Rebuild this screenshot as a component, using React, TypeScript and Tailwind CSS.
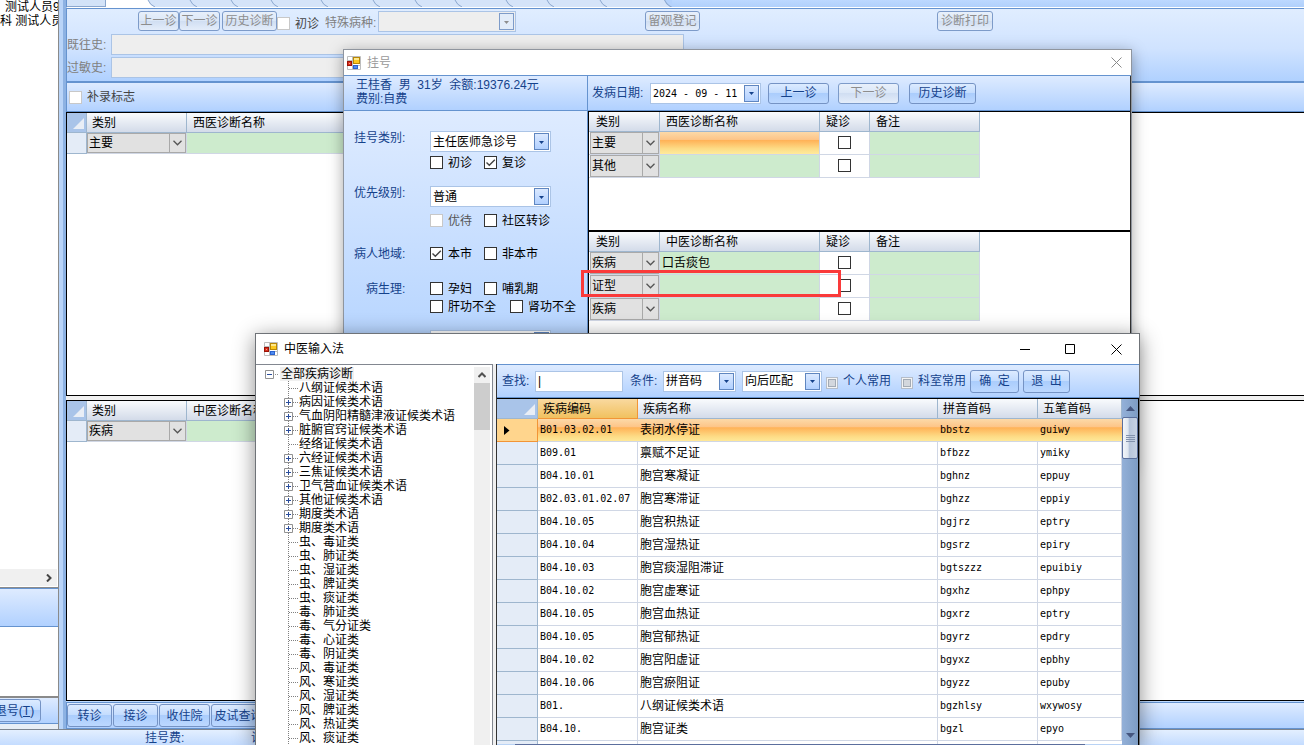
import React, { useState } from 'react'

const treeNodes = [
    { text: '八纲证候类术语', open: false },
    { text: '病因证候类术语', open: true },
    { text: '气血阴阳精髓津液证候类术语', open: true },
    { text: '脏腑官窍证候类术语', open: true },
    { text: '经络证候类术语', open: false },
    { text: '六经证候类术语', open: true },
    { text: '三焦证候类术语', open: true },
    { text: '卫气营血证候类术语', open: true },
    { text: '其他证候类术语', open: true },
    { text: '期度类术语', open: true },
    { text: '期度类术语', open: true },
    { text: '虫、毒证类', open: false },
    { text: '虫、肺证类', open: false },
    { text: '虫、湿证类', open: false },
    { text: '虫、脾证类', open: false },
    { text: '虫、痰证类', open: false },
    { text: '毒、肺证类', open: false },
    { text: '毒、气分证类', open: false },
    { text: '毒、心证类', open: false },
    { text: '毒、阴证类', open: false },
    { text: '风、毒证类', open: false },
    { text: '风、寒证类', open: false },
    { text: '风、湿证类', open: false },
    { text: '风、脾证类', open: false },
    { text: '风、热证类', open: false },
    { text: '风、痰证类', open: false },
]

const diseases = [
    ['B01.03.02.01', '表闭水停证', 'bbstz', 'guiwy'],
    ['B09.01', '禀赋不足证', 'bfbzz', 'ymiky'],
    ['B04.10.01', '胞宫寒凝证', 'bghnz', 'eppuy'],
    ['B02.03.01.02.07', '胞宫寒滞证', 'bghzz', 'eppiy'],
    ['B04.10.05', '胞宫积热证', 'bgjrz', 'eptry'],
    ['B04.10.04', '胞宫湿热证', 'bgsrz', 'epiry'],
    ['B04.10.03', '胞宫痰湿阻滞证', 'bgtszzz', 'epuibiy'],
    ['B04.10.02', '胞宫虚寒证', 'bgxhz', 'ephpy'],
    ['B04.10.05', '胞宫血热证', 'bgxrz', 'eptry'],
    ['B04.10.05', '胞宫郁热证', 'bgyrz', 'epdry'],
    ['B04.10.02', '胞宫阳虚证', 'bgyxz', 'epbhy'],
    ['B04.10.06', '胞宫瘀阻证', 'bgyzz', 'epuby'],
    ['B01.', '八纲证候类术语', 'bgzhlsy', 'wxywosy'],
    ['B04.10.', '胞宫证类', 'bgzl', 'epyo'],
]

// widths of the slanted page tabs, the first one is the open page
const tabWidths = ['w-[49px]', 'w-[42px]', 'w-[41px]', 'w-[40px]', 'w-[50px]', 'w-[52px]', 'w-[42px]', 'w-[40px]', 'w-[51px]', 'w-[41px]', 'w-[53px]', 'w-[65px]']

function Btn({ text, className = '', disabled = false }: { text: React.ReactNode, className?: string, disabled?: boolean }) {
    return (
        <button
            type="button"
            disabled={disabled}
            className={`shrink-0 rounded-[3px] border whitespace-nowrap text-center leading-[14px] ${disabled
                ? 'border-[#7d9bc9] text-[#8d8d8d] bg-[linear-gradient(#e8f0fb_0%,#dbe7f7_48%,#d0def2_50%,#e4edfa_100%)]'
                : 'border-[#7593c4] text-[#15428b] bg-[linear-gradient(#dcebff_0%,#c3dcfe_48%,#abcdfc_50%,#bcd8ff_100%)]'} ${className}`}
        >
            {text}
        </button>
    )
}

function Check({ text, label, checked = false, disabled = false, tone = 'text-black', className = '' }: { text?: string, label?: string, checked?: boolean, disabled?: boolean, tone?: string, className?: string }) {
    const [on, setOn] = useState(checked)

    return (
        <label className={`flex shrink-0 items-center gap-[5px] h-[13px] whitespace-nowrap ${tone} ${className}`}>
            <span className="grid size-[13px]">
                <input
                    type="checkbox"
                    aria-label={label}
                    checked={on}
                    disabled={disabled}
                    onChange={() => setOn(!on)}
                    className="col-start-1 row-start-1 appearance-none size-[13px] border border-[#333] bg-white disabled:border-[#c8c8c8]"
                />
                {on && (
                    <svg viewBox="0 0 13 13" className="col-start-1 row-start-1 size-[13px] pointer-events-none" fill="none" stroke="#444" strokeWidth="1.4">
                        <path d="M2.5 6.5 5.3 9.3 10.8 3.8" />
                    </svg>
                )}
            </span>
            {text}
        </label>
    )
}

// the small framed check box used in the search toolbar
function SoftCheck({ text, className = '' }: { text: string, className?: string }) {
    return (
        <label className={`flex shrink-0 items-center gap-[5px] whitespace-nowrap text-[#15428b] ${className}`}>
            <input type="checkbox" className="appearance-none size-[12px] mt-1 border border-[#b5bdc9] bg-[#d3d7dd] checked:bg-[#6f8fc4] shadow-[inset_0_0_0_1px_#f4f4f4,inset_0_0_0_2px_#a3abb5]" />
            {text}
        </label>
    )
}

function Combo({ value, label, className = '', disabled = false }: { value: string, label: string, className?: string, disabled?: boolean }) {
    return (
        <span className={`grid shrink-0 h-[21px] ${className}`}>
            <select
                aria-label={label}
                disabled={disabled}
                className={`col-start-1 row-start-1 appearance-none w-full h-full pl-[2px] border border-[#abc4e6] outline-none leading-[14px] opacity-100 ${disabled ? 'bg-[#eee]' : 'bg-white text-black'}`}
            >
                <option>{value}</option>
            </select>
            <DropMark disabled={disabled} />
        </span>
    )
}

function DropMark({ disabled = false }: { disabled?: boolean }) {
    return (
        <span className={`col-start-1 row-start-1 justify-self-end self-center mr-[2px] w-[15px] h-[17px] border flex items-center justify-center pointer-events-none ${disabled ? 'border-[#7d9bc9] bg-[#e2ecf9]' : 'border-[#5f86c0] bg-[linear-gradient(#dbe9ff,#b1d0ff)]'}`}>
            <svg viewBox="0 0 5 3" className="w-[5px] h-[3px] mt-px" fill={disabled ? '#8d8d8d' : '#15428b'}>
                <path d="M0 0H5L2.5 3Z" />
            </svg>
        </span>
    )
}

// gray combo that fills a grid cell
function CellCombo({ value }: { value: string }) {
    return (
        <span className="grid h-full">
            <select aria-label="类别" className="col-start-1 row-start-1 appearance-none w-full h-full pl-px border border-[#a9a9a9] bg-[#e1e1e1] outline-none leading-[14px]">
                <option>{value}</option>
            </select>
            <span className="col-start-1 row-start-1 justify-self-end w-[17px] h-full border border-[#a9a9a9] flex items-center justify-center pointer-events-none">
                <svg viewBox="0 0 9 6" className="w-[9px] h-[6px]" fill="none" stroke="#555" strokeWidth="1.3">
                    <path d="M.5.8 4.5 4.8 8.5.8" />
                </svg>
            </span>
        </span>
    )
}

function AppIcon() {
    return (
        <svg viewBox="0 0 14 14" className="size-[14px] shrink-0">
            <path d="M.5.5h13v13H.5zM.5 4.5h5M5.5.5v13M5.5 9.5h8" fill="#fff" stroke="#bdbdbd" />
            <rect x=".5" y="5.5" width="4" height="4" fill="#d8301c" stroke="#9c1206" />
            <rect x="2" y="7" width="1" height="1" fill="#ff9c86" />
            <rect x="6.5" y="1.5" width="6" height="6" fill="#fcc81e" stroke="#b98705" />
            <path d="M7 2h5v2H7z" fill="#ffe88a" />
            <rect x="6.5" y="9.5" width="4" height="3" fill="#4f8cf0" stroke="#2a62cf" />
        </svg>
    )
}

function SelectAllMark() {
    return (
        <svg viewBox="0 0 11 11" className="size-[11px] ml-auto mr-[2px] mt-[2px]">
            <path d="M11 0V11H0Z" fill="#e9eef6" />
        </svg>
    )
}

const head = 'h-5 border-r border-b border-[#9eb6ce] bg-[linear-gradient(#f9fbfd,#d3dbe9)] text-left font-normal'
const cell = 'border-r border-b border-[#d0d7e5] p-0'

function BackGrid({ name, type }: { name: string, type: string }) {
    return (
        <table className="w-[420px] table-fixed border-separate border-spacing-0">
            <thead>
                <tr>
                    <th className="w-5 h-5 p-0 border-r border-b border-[#9eb6ce] bg-[#a9c4e9]"><SelectAllMark /></th>
                    <th className={`${head} w-[100px] pl-[5px]`}>类别</th>
                    <th className={`${head} pl-[6px]`}>{name}</th>
                </tr>
            </thead>
            <tbody>
                <tr>
                    <td className="h-[21px] p-0 border-r border-b border-[#9eb6ce] bg-[#e4ecf7]" />
                    <td className={`${cell} h-[21px]`}><CellCombo value={type} /></td>
                    <td className={`${cell} bg-[#cdebcd]`} />
                </tr>
            </tbody>
        </table>
    )
}

function DiagnosisGrid({ name, rows }: { name: string, rows: { type: string, text: string, hot?: boolean }[] }) {
    return (
        <table className="table-fixed border-separate border-spacing-0 w-[391px]">
            <thead>
                <tr>
                    <th className={`${head} w-[71px] pl-[7px]`}>类别</th>
                    <th className={`${head} w-[160px] pl-[6px]`}>{name}</th>
                    <th className={`${head} w-[50px] pl-[6px]`}>疑诊</th>
                    <th className={`${head} w-[110px] pl-[6px]`}>备注</th>
                </tr>
            </thead>
            <tbody>
                {rows.map((row, index) => (
                    <tr key={index}>
                        <td className={`${cell} h-[23px] pl-px`}><CellCombo value={row.type} /></td>
                        <td className={`${cell} pl-[2px] ${row.hot ? 'bg-[linear-gradient(#fcd9a8_0%,#fdc588_34%,#ffb257_38%,#fddb85_75%,#ffeb9c_100%)]' : 'bg-[#cdebcd]'}`}>{row.text}</td>
                        <td className={`${cell} bg-white pb-[2px]`}><Check label="疑诊" className="justify-center" /></td>
                        <td className={`${cell} bg-[#cdebcd]`} />
                    </tr>
                ))}
            </tbody>
        </table>
    )
}

function Patients() {
    return (
        <div className="w-[59px] shrink-0 flex flex-col overflow-hidden border-r border-[#8a8a8a]">
            <div className="h-[588px] shrink-0 bg-white border-b border-[#8a8a8a] flex flex-col whitespace-pre leading-[14px]">
                <div className="pl-[5px]">测试人员9</div>
                <div>科 测试人员</div>
                <div className="mt-auto mb-px mr-px h-[17px] bg-[#f0f0f0] flex items-center justify-end pr-[5px]">
                    <svg viewBox="0 0 6 8" className="w-[6px] h-[8px]" fill="none" stroke="#444" strokeWidth="2">
                        <path d="M1 .5 4.5 4 1 7.5" />
                    </svg>
                </div>
            </div>
            <div className="h-[39px] shrink-0 border-y border-[#6593cf] bg-[linear-gradient(#deebff,#b1d1ff)]" />
            <div className="flex-1 bg-white border-b-2 border-[#8a8a8a]" />
            <div className="h-[26px] shrink-0 flex items-start bg-[linear-gradient(#deebff,#b1d1ff)] border-b border-[#6593cf]">
                <Btn text={<>退号(<u>T</u>)</>} className="-ml-3 w-[53px] h-[23px] mt-px" />
            </div>
            <div className="h-[5px] shrink-0 bg-[#e8eef6]" />
        </div>
    )
}

function Workspace() {
    return (
        <div className="flex-1 min-w-0 flex flex-col">
            <div className="h-[8px] shrink-0 flex bg-[#b9d6ff] border-l border-b border-l-[#6593cf] border-b-white overflow-hidden">
                <div className="w-[39px] shrink-0 bg-[#d3e3f8] border-r border-b border-[#8ba7ce]" />
                <div className="flex flex-1 bg-[linear-gradient(#bcd8ff,#b0d0fb)]">
                    {tabWidths.map((width, index) => (
                        <svg key={index} viewBox="0 0 60 7" preserveAspectRatio="xMaxYMid slice" className={`${width} h-[7px] shrink-0`}>
                            <path d="M-10 0H60V7H-10Z" fill={index == tabWidths.length - 1 ? '#b4d2fc' : '#d5e4f9'} />
                            <path d="M-10 0H53Q55 6 60 7H-10Z" fill={index == 0 ? '#fff' : '#d5e4f9'} />
                            <path d="M53 0Q55 5 60 7" fill="none" stroke="#8ba7ce" />
                        </svg>
                    ))}
                </div>
            </div>

            <div className="h-[75px] shrink-0 border-t border-l border-b-2 border-[#6593cf] bg-[linear-gradient(#e0edff,#d0e3ff_55%,#b0d1ff)] pt-[2px] flex flex-col gap-[2px] text-[#808080] overflow-hidden">
                <div className="flex h-[21px] items-start whitespace-nowrap">
                    <Btn text="上一诊" disabled className="ml-[71px] w-[41px] h-5" />
                    <Btn text="下一诊" disabled className="w-[41px] h-5" />
                    <Btn text="历史诊断" disabled className="ml-[2px] w-[55px] h-5" />
                    <Check text="初诊" disabled tone="text-[#444]" className="mt-[6px]" />
                    <span className="ml-[6px] mt-[5px] w-[53px]">特殊病种:</span>
                    <Combo value="" label="特殊病种" disabled className="w-[138px]" />
                    <Btn text="留观登记" disabled className="ml-[129px] w-[55px] h-5" />
                    <Btn text="诊断打印" disabled className="ml-[237px] w-[56px] h-5" />
                </div>
                <div className="flex h-[21px] items-center">
                    <label htmlFor="past" className="w-[44px] shrink-0">既往史:</label>
                    <input id="past" disabled className="w-[573px] h-[21px] border border-[#abc4e6] bg-[#eee]" />
                </div>
                <div className="flex h-[21px] items-center">
                    <label htmlFor="allergy" className="w-[44px] shrink-0">过敏史:</label>
                    <input id="allergy" disabled className="w-[573px] h-[21px] border border-[#abc4e6] bg-[#eee]" />
                </div>
            </div>

            <div className="h-[29px] shrink-0 flex items-center pl-[2px] border-b border-l border-[#6593cf] bg-[linear-gradient(#deebff,#b1d1ff)]">
                <Check text="补录标志" disabled tone="text-[#444]" />
            </div>

            <div className="h-[284px] shrink-0 border-y border-l border-black bg-white overflow-hidden">
                <BackGrid name="西医诊断名称" type="主要" />
            </div>
            <div className="h-1 shrink-0 bg-[#f0f0f0]" />
            <div className="flex-1 border-y border-l border-black bg-white overflow-hidden">
                <BackGrid name="中医诊断名称" type="疾病" />
            </div>

            <div className="h-[27px] shrink-0 mt-px flex items-start gap-px border-y border-l border-[#6593cf] bg-[linear-gradient(#deebff,#b1d1ff)] pt-px">
                <Btn text="转诊" className="w-[45px] h-[23px]" />
                <Btn text="接诊" className="w-[45px] h-[23px]" />
                <Btn text="收住院" className="w-[51px] h-[23px]" />
                <Btn text="皮试查询" className="w-[55px] h-[23px]" />
            </div>
        </div>
    )
}

function Register() {
    return (
        <div className="absolute left-[343px] top-[49px] w-[789px] h-[420px] flex flex-col bg-white border border-[#8f959e] shadow-[0_3px_14px_rgba(0,0,0,0.35)]">
            <div className="h-[25px] shrink-0 flex items-center pl-[3px] text-[#999]">
                <AppIcon />
                <span className="ml-[6px]">挂号</span>
                <button type="button" aria-label="关闭" className="ml-auto w-[30px] h-full flex items-center justify-center">
                    <svg viewBox="0 0 11 11" className="size-[11px]" stroke="#8a8a8a">
                        <path d="M.5.5l10 10M10.5.5l-10 10" />
                    </svg>
                </button>
            </div>
            <div className="flex flex-1 min-h-0 border-t border-[#6593cf]">
                <div className="w-[244px] shrink-0 flex flex-col border-r border-[#6593cf] text-[#15428b]">
                    <div className="h-[35px] shrink-0 pt-[2px] pl-3 leading-[14px] border-b border-[#6593cf] bg-[linear-gradient(#deebff,#b1d1ff)]">
                        <div>王桂香&nbsp; 男&nbsp; 31岁&nbsp; 余额:19376.24元</div>
                        <div>费别:自费</div>
                    </div>
                    <div className="flex-1 pt-5 bg-[linear-gradient(#deebff,#b5d4ff_240px)]">
                        <div className="flex items-start leading-[14px]">
                            <span className="w-[86px] pl-[10px]">挂号类别:</span>
                            <Combo value="主任医师急诊号" label="挂号类别" className="w-[121px]" />
                        </div>
                        <div className="flex pl-[86px] mt-1">
                            <Check text="初诊" className="w-[54px]" />
                            <Check text="复诊" checked />
                        </div>
                        <div className="flex items-start leading-[14px] mt-[17px]">
                            <span className="w-[86px] pl-[10px]">优先级别:</span>
                            <Combo value="普通" label="优先级别" className="w-[121px]" />
                        </div>
                        <div className="flex pl-[86px] mt-[7px]">
                            <Check text="优待" disabled tone="text-[#555]" className="w-[54px]" />
                            <Check text="社区转诊" />
                        </div>
                        <div className="flex items-center h-[13px] mt-5">
                            <span className="w-[86px] pl-[10px]">病人地域:</span>
                            <Check text="本市" checked className="w-[54px]" />
                            <Check text="非本市" />
                        </div>
                        <div className="flex items-center h-[13px] mt-[22px]">
                            <span className="w-[86px] pl-[22px]">病生理:</span>
                            <Check text="孕妇" className="w-[54px]" />
                            <Check text="哺乳期" />
                        </div>
                        <div className="flex pl-[86px] mt-[5px]">
                            <Check text="肝功不全" className="w-[80px]" />
                            <Check text="肾功不全" />
                        </div>
                        <div className="flex pl-[86px] mt-[17px]">
                            <Combo value="" label="病情" className="w-[121px]" />
                        </div>
                    </div>
                </div>
                <div className="flex-1 flex flex-col border-r border-[#333]">
                    <div className="h-[35px] shrink-0 flex items-center pl-1 border-b border-[#6593cf] bg-[linear-gradient(#deebff,#b1d1ff)]">
                        <label htmlFor="onset" className="w-[58px] text-[#15428b]">发病日期:</label>
                        <span className="grid w-[111px] h-[21px]">
                            <input id="onset" defaultValue="2024 - 09 - 11" className="col-start-1 row-start-1 w-full h-full pl-[2px] border border-[#abc4e6] bg-white outline-none font-['DejaVu_Sans_Mono',monospace] text-[10px]" />
                            <DropMark />
                        </span>
                        <Btn text="上一诊" className="ml-[7px] w-[61px] h-[21px]" />
                        <Btn text="下一诊" disabled className="ml-[9px] w-[61px] h-[21px]" />
                        <Btn text="历史诊断" className="ml-[10px] w-[67px] h-[21px]" />
                    </div>
                    <div className="h-[120px] shrink-0 border-y border-l border-black">
                        <DiagnosisGrid name="西医诊断名称" rows={[{ type: '主要', text: '', hot: true }, { type: '其他', text: '' }]} />
                    </div>
                    <div className="flex-1 border-t border-l border-black">
                        <DiagnosisGrid name="中医诊断名称" rows={[{ type: '疾病', text: '口舌痰包' }, { type: '证型', text: '' }, { type: '疾病', text: '' }]} />
                    </div>
                </div>
            </div>
            <div className="absolute left-[237px] top-[220px] w-[260px] h-[27px] border-3 border-[#fa3a3a] pointer-events-none" />
        </div>
    )
}

function TreeMark({ open }: { open: boolean }) {
    return (
        <svg viewBox="0 0 16 14" className="w-4 h-[14px] shrink-0" fill="none" stroke="#808080">
            <path d="M5.5 0V14" strokeDasharray="1 1" />
            <path d="M6 7.5H15" strokeDasharray="1 1" />
            {open && <path d="M1.5 3.5h8v8h-8z" fill="#fff" stroke="#919191" />}
            {open && <path d="M3 7.5h5M5.5 5v5" stroke="#2a4d9c" />}
        </svg>
    )
}

function Tree() {
    return (
        <div className="w-[237px] shrink-0 flex bg-white border-t border-r border-[#828790]">
            <div className="flex-1 pt-[2px] pl-[8px] leading-[14px] overflow-hidden whitespace-nowrap">
                <div className="flex h-[14px]">
                    <svg viewBox="0 0 16 14" className="w-4 h-[14px] shrink-0" fill="none" stroke="#919191">
                        <path d="M1.5 3.5h8v8h-8z" fill="#fff" />
                        <path d="M3 7.5h5" stroke="#2a4d9c" />
                        <path d="M11 7.5H15" strokeDasharray="1 1" />
                    </svg>
                    <span className="bg-[#f0f0f0] px-px">全部疾病诊断</span>
                </div>
                {treeNodes.map((node, index) => (
                    <div key={index} className="flex h-[14px] pl-[19px]">
                        <TreeMark open={node.open} />
                        {node.text}
                    </div>
                ))}
            </div>
            <div className="w-4 mr-[2px] mt-[2px] bg-[#f0f0f0] flex flex-col">
                <div className="h-4 shrink-0 flex items-center justify-center">
                    <svg viewBox="0 0 8 6" className="w-[8px] h-[6px]" fill="none" stroke="#505050" strokeWidth="2">
                        <path d="M.5 5 4 1.5 7.5 5" />
                    </svg>
                </div>
                <div className="h-[47px] bg-[#cdcdcd]" />
            </div>
        </div>
    )
}

function DiseaseTable() {
    const [current, setCurrent] = useState(0)
    const hot = 'bg-[linear-gradient(#fcd9a8_0%,#fdc588_34%,#ffb257_38%,#fddb85_75%,#ffeb9c_100%)]'

    return (
        <table className="flex-1 table-fixed border-separate border-spacing-0">
            <thead>
                <tr>
                    <th className="w-[41px] h-5 p-0 border-r border-b border-[#9eb6ce] bg-[#a9c4e9]"><SelectAllMark /></th>
                    <th className="w-[100px] pl-[5px] text-left font-normal border-r border-b border-[#f29536] bg-[linear-gradient(#f9d99f,#f1c15f)]">疾病编码</th>
                    <th className={`${head} w-[300px] pl-[5px]`}>疾病名称</th>
                    <th className={`${head} w-[100px] pl-[5px]`}>拼音首码</th>
                    <th className={`${head} w-[84px] pl-[5px]`}>五笔首码</th>
                </tr>
            </thead>
            <tbody>
                {diseases.map((row, index) => (
                    <tr key={index} onClick={() => setCurrent(index)} className={index == current ? hot : 'bg-white'}>
                        <td className={`h-[23px] p-0 border-r border-b ${index == current ? 'border-[#f29536] bg-[#ffd58d]' : 'border-[#9eb6ce] bg-[#e4ecf7]'}`}>
                            {index == current && (
                                <svg viewBox="0 0 6 9" className="w-[6px] h-[9px] ml-[7px]"><path d="M0 0 5.5 4.5 0 9Z" /></svg>
                            )}
                        </td>
                        {row.map((text, i) => (
                            <td key={i} className={`p-0 pl-[2px] border-b border-[#d0d7e5] ${index == current ? '' : 'border-r'} ${i == 1 ? '' : "font-['DejaVu_Sans_Mono',monospace] text-[10px]"}`}>{text}</td>
                        ))}
                    </tr>
                ))}
            </tbody>
        </table>
    )
}

function InputMethod() {
    return (
        <div className="absolute left-[255px] top-[333px] bottom-0 w-[885px] flex flex-col bg-white border border-b-0 border-[#6f7378] shadow-[0_4px_20px_rgba(0,0,0,0.45)]">
            <div className="h-[30px] shrink-0 flex items-center pl-2 text-black">
                <AppIcon />
                <span className="ml-[6px]">中医输入法</span>
                <div className="ml-auto flex h-full">
                    <button type="button" aria-label="最小化" className="w-[46px] flex items-center justify-center">
                        <svg viewBox="0 0 11 11" className="size-[11px]" stroke="#000"><path d="M0 5.5h10" /></svg>
                    </button>
                    <button type="button" aria-label="最大化" className="w-[45px] flex items-center justify-center">
                        <svg viewBox="0 0 11 11" className="size-[11px]" fill="none" stroke="#000"><path d="M.5.5h9v9h-9z" /></svg>
                    </button>
                    <button type="button" aria-label="关闭" className="w-[46px] flex items-center justify-center">
                        <svg viewBox="0 0 11 11" className="size-[11px]" stroke="#000"><path d="M.5.5l10 10M10.5.5l-10 10" /></svg>
                    </button>
                </div>
            </div>
            <div className="flex flex-1 min-h-0 overflow-hidden bg-[#f0f0f0]">
                <Tree />
                <div className="flex-1 min-w-0 ml-[3px] flex flex-col border-l border-[#333]">
                    <div className="h-[34px] shrink-0 flex items-center pl-[5px] border-y border-[#6593cf] bg-[linear-gradient(#deebff,#b1d1ff)] text-[#15428b] whitespace-nowrap">
                        <label htmlFor="find" className="w-[33px] shrink-0">查找:</label>
                        <input id="find" defaultValue="|" className="w-[88px] h-[21px] pl-[2px] border border-[#abc4e6] bg-white text-black outline-none" />
                        <span className="ml-[7px] w-[33px] shrink-0">条件:</span>
                        <Combo value="拼音码" label="条件" className="w-[73px]" />
                        <Combo value="向后匹配" label="匹配方式" className="ml-[6px] w-[80px]" />
                        <SoftCheck text="个人常用" className="ml-1" />
                        <SoftCheck text="科室常用" className="ml-[10px]" />
                        <Btn text={<>确&nbsp; 定</>} className="ml-1 w-[49px] h-[23px]" />
                        <Btn text={<>退&nbsp; 出</>} className="ml-1 w-[47px] h-[23px]" />
                    </div>
                    <div className="flex flex-1 min-h-0 border-t border-black">
                        <div className="flex-1 min-w-0 flex flex-col">
                            <div className="flex items-start">
                                <DiseaseTable />
                            </div>
                            {/* next row, cut by the horizontal scroll bar */}
                            <div className="flex flex-1 bg-white">
                                <div className="w-[41px] border-r border-[#9eb6ce] bg-[#e4ecf7]" />
                                <div className="w-[100px] border-r border-[#d0d7e5]" />
                                <div className="w-[300px] border-r border-[#d0d7e5]" />
                                <div className="w-[100px] border-r border-[#d0d7e5]" />
                            </div>
                            <div className="h-px shrink-0 px-[18px] bg-[#b9d3f5]">
                                <div className="w-[570px] h-px bg-[#5c6f9e]" />
                            </div>
                        </div>
                        <div className="w-[17px] shrink-0 flex flex-col border-r border-black bg-[linear-gradient(90deg,#93b0d8,#7d9cc4)]">
                            <div className="h-[18px] shrink-0 flex items-center justify-center">
                                <svg viewBox="0 0 9 5" className="w-[9px] h-[5px]" fill="#45567f"><path d="M0 5H9L4.5 0Z" /></svg>
                            </div>
                            <div className="h-[42px] shrink-0 rounded-[2px] border border-[#5a6f9c] bg-[linear-gradient(90deg,#f3f6fa,#dde5ef_38%,#b5c4da_42%,#c6d2e4)] flex items-center justify-center">
                                <svg viewBox="0 0 9 7" className="w-[9px] h-[7px]" stroke="#8292ad"><path d="M0 .5h9M0 2.5h9M0 4.5h9M0 6.5h9" /></svg>
                            </div>
                            <div className="mt-auto h-[12px] flex justify-center">
                                <svg viewBox="0 0 9 5" className="w-[9px] h-[5px]" fill="#45567f"><path d="M0 0H9L4.5 5Z" /></svg>
                            </div>
                        </div>
                    </div>
                </div>
            </div>
        </div>
    )
}

function App() {
    return (
        <div className="relative w-full h-screen overflow-hidden flex flex-col bg-[#bfdbff] text-black text-[12px] leading-[14px] font-['Liberation_Sans','Noto_Sans_CJK_SC',sans-serif] select-none">
            <div className="flex flex-1 min-h-0">
                <Patients />
                <div className="w-[7px] shrink-0 bg-[#b9d4f8] border-r-3 border-[#8db2e3]" />
                <Workspace />
            </div>
            <div className="h-4 shrink-0 flex items-center border-t border-[#7d8590] pl-[145px] bg-[linear-gradient(#e3efff,#c4dcff)] text-[#15428b]">
                <span className="w-[106px]">挂号费:</span>
                <span>诊查费:</span>
            </div>
            <Register />
            <InputMethod />
        </div>
    )
}

export default App
